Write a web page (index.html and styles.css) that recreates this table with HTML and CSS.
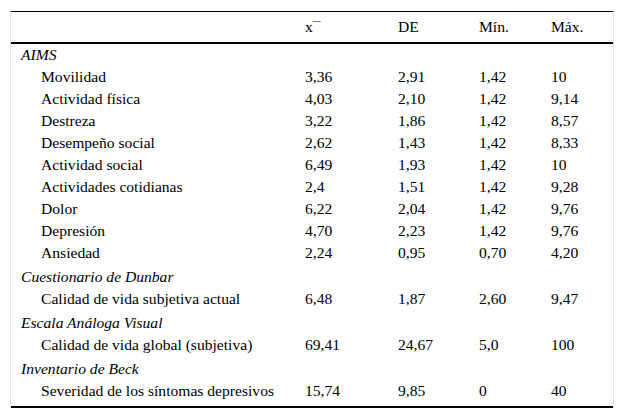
FILE: index.html
```html
<!DOCTYPE html>
<html lang="es">
<head>
<meta charset="utf-8">
<link rel="stylesheet" href="styles.css">
</head>
<body>
<div class="frame">
<table class="stats">
  <colgroup>
    <col class="c-label"><col class="c-mean"><col class="c-de"><col class="c-min"><col class="c-max">
  </colgroup>
  <thead>
    <tr><th></th><th>x¯</th><th>DE</th><th>Mín.</th><th>Máx.</th></tr>
  </thead>
  <tbody>
    <tr class="cat first"><td colspan="5">AIMS</td></tr>
    <tr><td class="item">Movilidad</td><td>3,36</td><td>2,91</td><td>1,42</td><td>10</td></tr>
    <tr><td class="item">Actividad física</td><td>4,03</td><td>2,10</td><td>1,42</td><td>9,14</td></tr>
    <tr><td class="item">Destreza</td><td>3,22</td><td>1,86</td><td>1,42</td><td>8,57</td></tr>
    <tr><td class="item">Desempeño social</td><td>2,62</td><td>1,43</td><td>1,42</td><td>8,33</td></tr>
    <tr><td class="item">Actividad social</td><td>6,49</td><td>1,93</td><td>1,42</td><td>10</td></tr>
    <tr><td class="item">Actividades cotidianas</td><td>2,4</td><td>1,51</td><td>1,42</td><td>9,28</td></tr>
    <tr><td class="item">Dolor</td><td>6,22</td><td>2,04</td><td>1,42</td><td>9,76</td></tr>
    <tr><td class="item">Depresión</td><td>4,70</td><td>2,23</td><td>1,42</td><td>9,76</td></tr>
    <tr><td class="item">Ansiedad</td><td>2,24</td><td>0,95</td><td>0,70</td><td>4,20</td></tr>
    <tr class="cat"><td colspan="5">Cuestionario de Dunbar</td></tr>
    <tr><td class="item">Calidad de vida subjetiva actual</td><td>6,48</td><td>1,87</td><td>2,60</td><td>9,47</td></tr>
    <tr class="cat"><td colspan="5">Escala Análoga Visual</td></tr>
    <tr><td class="item">Calidad de vida global (subjetiva)</td><td>69,41</td><td>24,67</td><td>5,0</td><td>100</td></tr>
    <tr class="cat"><td colspan="5">Inventario de Beck</td></tr>
    <tr class="last"><td class="item">Severidad de los síntomas depresivos</td><td>15,74</td><td>9,85</td><td>0</td><td>40</td></tr>
  </tbody>
</table>
</div>
</body>
</html>
```

FILE: styles.css
```css
html, body {
  margin: 0;
  padding: 0;
  background: #ffffff;
}
body {
  padding: 10px 0 0 10px;
  font-family: "Liberation Serif", "Times New Roman", serif;
  color: #000;
}
.frame {
  width: 602px;
  border-left: 1px solid #e4e4e4;
  border-right: 1px solid #e4e4e4;
  padding-top: 1px;
}
.stats {
  width: 602px;
  border-collapse: collapse;
  table-layout: fixed;
  font-family: "Liberation Serif", "Times New Roman", serif;
  font-size: 15.6px;
  border-bottom: 2px solid #000;
}
.c-label { width: 284px; }
.c-mean { width: 93px; }
.c-de { width: 81px; }
.c-min { width: 72px; }
.c-max { width: 72px; }
.stats thead tr {
  border-top: 1px solid #000;
  border-bottom: 2px solid #000;
}
.stats th {
  font-weight: normal;
  text-align: left;
  height: 30px;
  padding: 0 0 0 10px;
  line-height: 18px;
}
.stats td {
  height: 22px;
  padding: 0 0 0 10px;
  line-height: 18px;
  white-space: nowrap;
}
.stats td.item {
  padding-left: 30px;
}
.stats tr.cat td {
  font-style: italic;
  height: 22px;
  padding-top: 2px;
}
.stats tr.cat.first td {
  padding-top: 0;
}
.stats tr.last td {
  height: 22px;
  padding-bottom: 4px;
}
```
